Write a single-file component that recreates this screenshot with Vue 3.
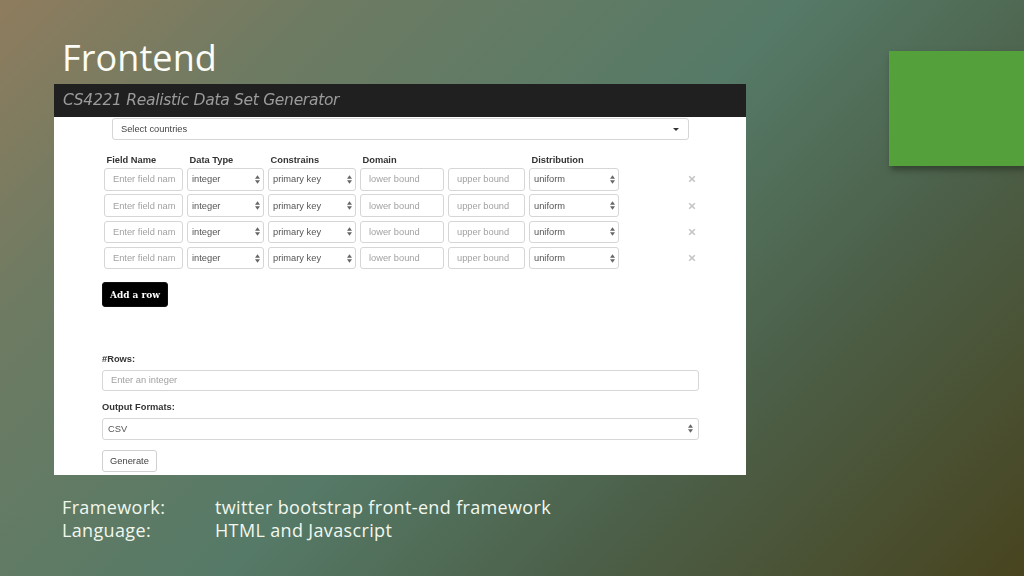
<script setup>
const rows = [1, 2, 3, 4];

const columns = ['Field Name', 'Data Type', 'Constrains', 'Domain', '', 'Distribution'];
</script>

<template>
  <div class="slide">
    <h1 class="slide-title">Frontend</h1>

    <div class="shot">
      <div class="shot-header">CS4221 Realistic Data Set Generator</div>

      <div class="shot-body">
        <div class="control countries">
          <span>Select countries</span>
          <span class="caret"></span>
        </div>

        <div class="fields">
          <div class="field-row labels">
            <b v-for="(col, i) in columns" :key="i">{{ col }}</b>
          </div>
          <div v-for="row in rows" :key="row" class="field-row">
            <div class="control ph">Enter field nam</div>
            <div class="control">
              integer
              <svg class="updown" viewBox="0 0 6 10"><path d="M3 0 6 4H0zM3 10 0 6h6z" /></svg>
            </div>
            <div class="control">
              primary key
              <svg class="updown" viewBox="0 0 6 10"><path d="M3 0 6 4H0zM3 10 0 6h6z" /></svg>
            </div>
            <div class="control ph">lower bound</div>
            <div class="control ph">upper bound</div>
            <div class="control">
              uniform
              <svg class="updown" viewBox="0 0 6 10"><path d="M3 0 6 4H0zM3 10 0 6h6z" /></svg>
            </div>
            <svg class="remove" viewBox="0 0 10 10"><path d="M1.5 1.5 8.5 8.5M8.5 1.5 1.5 8.5" /></svg>
          </div>
        </div>

        <button class="add-row">Add a row</button>

        <div class="output">
          <label>#Rows:</label>
          <div class="control ph wide">Enter an integer</div>
          <label>Output Formats:</label>
          <div class="control format">
            CSV
            <svg class="updown" viewBox="0 0 6 10"><path d="M3 0 6 4H0zM3 10 0 6h6z" /></svg>
          </div>
          <button class="generate">Generate</button>
        </div>
      </div>
    </div>

    <div class="notes">
      <span>Framework:</span><span>twitter bootstrap front-end framework</span>
      <span>Language:</span><span>HTML and Javascript</span>
    </div>

    <div class="accent"></div>
  </div>
</template>

<style>
html, body {
  margin: 0;
}
</style>

<style scoped>
.slide {
  position: relative;
  width: 1024px;
  height: 576px;
  overflow: hidden;
  box-sizing: border-box;
  padding-top: 36px;
  font-family: "Open Sans", sans-serif;
  color: #fff;
  background: linear-gradient(135deg, #8f7c5e 0%, #6e7b62 20%, #557a67 50%, #4c5f48 72%, #48441f 100%);
}

.slide-title {
  margin: 0 0 0 62px;
  height: 48px;
  font-size: 36px;
  line-height: 44px;
  font-weight: 400;
  letter-spacing: 0.1px;
  color: #fbfcf6;
}

.shot {
  width: 692px;
  height: 391px;
  margin-left: 54px;
  background: #fff;
  font-family: "Liberation Sans", Arial, sans-serif;
  font-size: 9.3px;
  color: #555;
  filter: blur(0.35px);
}

.shot-header {
  height: 33px;
  box-sizing: border-box;
  padding-left: 9px;
  background: #202020;
  color: #9b9b9b;
  font-family: "DejaVu Sans", sans-serif;
  font-style: italic;
  font-size: 15.5px;
  line-height: 32px;
  letter-spacing: -0.3px;
}

.shot-body {
  padding: 1px 47px 0 48px;
}

.control {
  display: flex;
  align-items: center;
  justify-content: space-between;
  box-sizing: border-box;
  height: 22.5px;
  padding: 0 3px 0 4px;
  background: #fff;
  border: 1px solid #d6d6d6;
  border-radius: 3px;
  white-space: nowrap;
  overflow: hidden;
}

.ph {
  padding-left: 8px;
  color: #a2a2a2;
}

.countries {
  width: 577px;
  height: 22px;
  margin-left: 10px;
  padding: 0 9px 0 8px;
  color: #444;
}

.caret {
  width: 0;
  height: 0;
  border: 3px solid transparent;
  border-top-color: #333;
  border-bottom: 0;
}

.updown {
  width: 5px;
  height: 9px;
  fill: #666;
  flex: none;
}

.fields {
  margin: 13px 0 0 2px;
}

.field-row {
  display: grid;
  grid-template-columns: 79px 77px 88px 84px 77px 90px 14px;
  column-gap: 4px;
  align-items: center;
  margin-bottom: 3.83px;
}

.labels {
  height: 15px;
  margin-bottom: 0;
  align-items: start;
  color: #333;
}

.labels b {
  padding: 2px 0 0 2.5px;
}

.remove {
  width: 8px;
  height: 8px;
  margin-left: 65px;
  stroke: #c4c4c4;
  stroke-width: 2;
  fill: none;
}

.add-row {
  display: block;
  width: 66px;
  height: 25px;
  margin: 12.5px 0 0 0;
  padding: 0;
  background: #000;
  color: #fff;
  border: 1px solid #111;
  border-radius: 3px;
  font-family: "DejaVu Serif Condensed", "DejaVu Serif", serif;
  font-weight: 700;
  font-size: 10px;
}

.output {
  margin-top: 47px;
}

.output label {
  display: block;
  height: 14px;
  margin-bottom: 2px;
  font-weight: 700;
  color: #333;
}

.wide {
  width: 597px;
  height: 21px;
  margin-bottom: 11px;
}

.format {
  width: 597px;
  height: 22px;
  margin-bottom: 10px;
  padding: 0 5px;
}

.generate {
  display: block;
  width: 55px;
  height: 22px;
  padding: 0;
  background: #fff;
  border: 1px solid #d0d0d0;
  border-radius: 3px;
  font-family: "Liberation Sans", Arial, sans-serif;
  font-size: 9.3px;
  color: #444;
}

.notes {
  display: grid;
  grid-template-columns: 153px auto;
  margin: 21px 0 0 62px;
  font-size: 18px;
  line-height: 23px;
  letter-spacing: 0.35px;
  color: #f1f7ee;
}

.accent {
  position: absolute;
  top: 51px;
  left: 889px;
  width: 135px;
  height: 115px;
  background: #54a03a;
  box-shadow: 2px 4px 6px rgba(30, 40, 25, 0.55);
}
</style>
